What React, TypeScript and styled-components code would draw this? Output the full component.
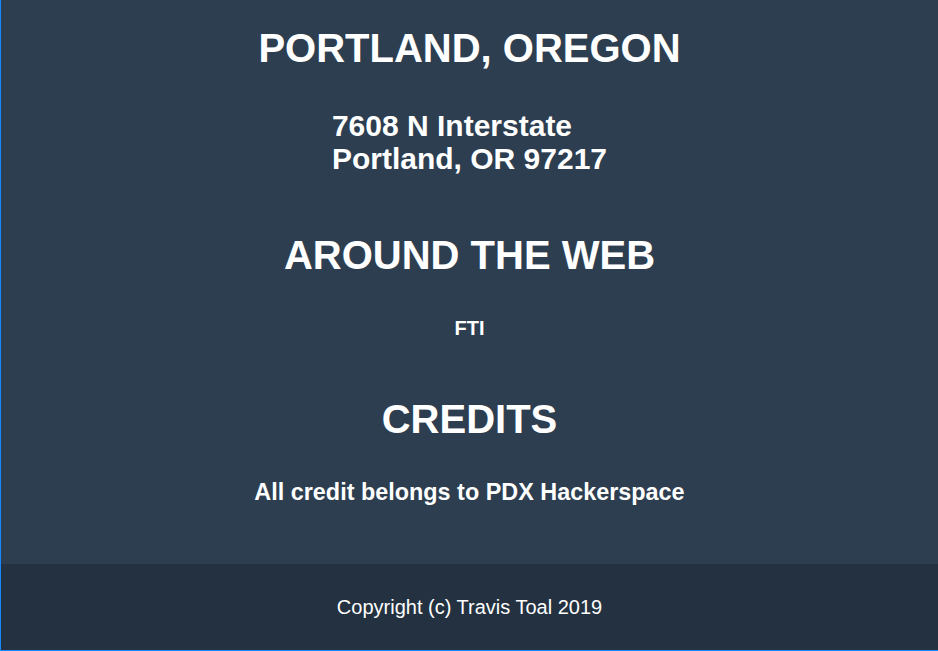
import React from "react";
import styled, { createGlobalStyle } from "styled-components";

const GlobalStyle = createGlobalStyle`
  html, body {
    margin: 0;
    padding: 0;
    background: #2c3e50;
  }
  body {
    font-family: "Liberation Sans", Arial, sans-serif;
    color: #ffffff;
  }
  * { box-sizing: border-box; }
`;

const Page = styled.div`
  width: 938px;
  height: 651px;
  display: flex;
  flex-direction: column;
  border-left: 1px solid #1589ff;
  border-bottom: 1px solid #1589ff;
  overflow: hidden;
`;

const FooterAbove = styled.section`
  flex: 1;
  background: #2c3e50;
  display: flex;
  flex-direction: column;
  align-items: center;
  padding-top: 26px;
`;

const Block = styled.div<{ $gap: number; $top?: number }>`
  display: flex;
  flex-direction: column;
  align-items: center;
  gap: ${(p) => p.$gap}px;
  margin-top: ${(p) => p.$top ?? 0}px;
`;

const Heading = styled.h3`
  margin: 0;
  font-size: 40px;
  line-height: 44px;
  font-weight: 700;
  text-transform: uppercase;
  color: #ffffff;
`;

const Address = styled.p`
  margin: 0;
  font-size: 30px;
  line-height: 33px;
  font-weight: 700;
  text-align: left;
`;

const LinkRow = styled.a`
  font-size: 20px;
  line-height: 23px;
  font-weight: 700;
  color: #ffffff;
  text-decoration: none;
`;

const Credit = styled.p`
  margin: 0;
  font-size: 23.4px;
  line-height: 26px;
  font-weight: 700;
`;

const FooterBelow = styled.footer`
  height: 86px;
  background: #233140;
  display: flex;
  justify-content: center;
  align-items: center;
`;

const Copyright = styled.p`
  margin: 0;
  font-size: 20px;
  line-height: 23px;
  font-weight: 400;
`;

export default function App() {
  return (
    <>
      <GlobalStyle />
      <Page>
        <FooterAbove>
          <Block $gap={39}>
            <Heading>Portland, Oregon</Heading>
            <Address>
              7608 N Interstate
              <br />
              Portland, OR 97217
            </Address>
          </Block>
          <Block $gap={40} $top={58}>
            <Heading>Around the Web</Heading>
            <LinkRow href="#">FTI</LinkRow>
          </Block>
          <Block $gap={38} $top={57}>
            <Heading>Credits</Heading>
            <Credit>All credit belongs to PDX Hackerspace</Credit>
          </Block>
        </FooterAbove>
        <FooterBelow>
          <Copyright>Copyright (c) Travis Toal 2019</Copyright>
        </FooterBelow>
      </Page>
    </>
  );
}
